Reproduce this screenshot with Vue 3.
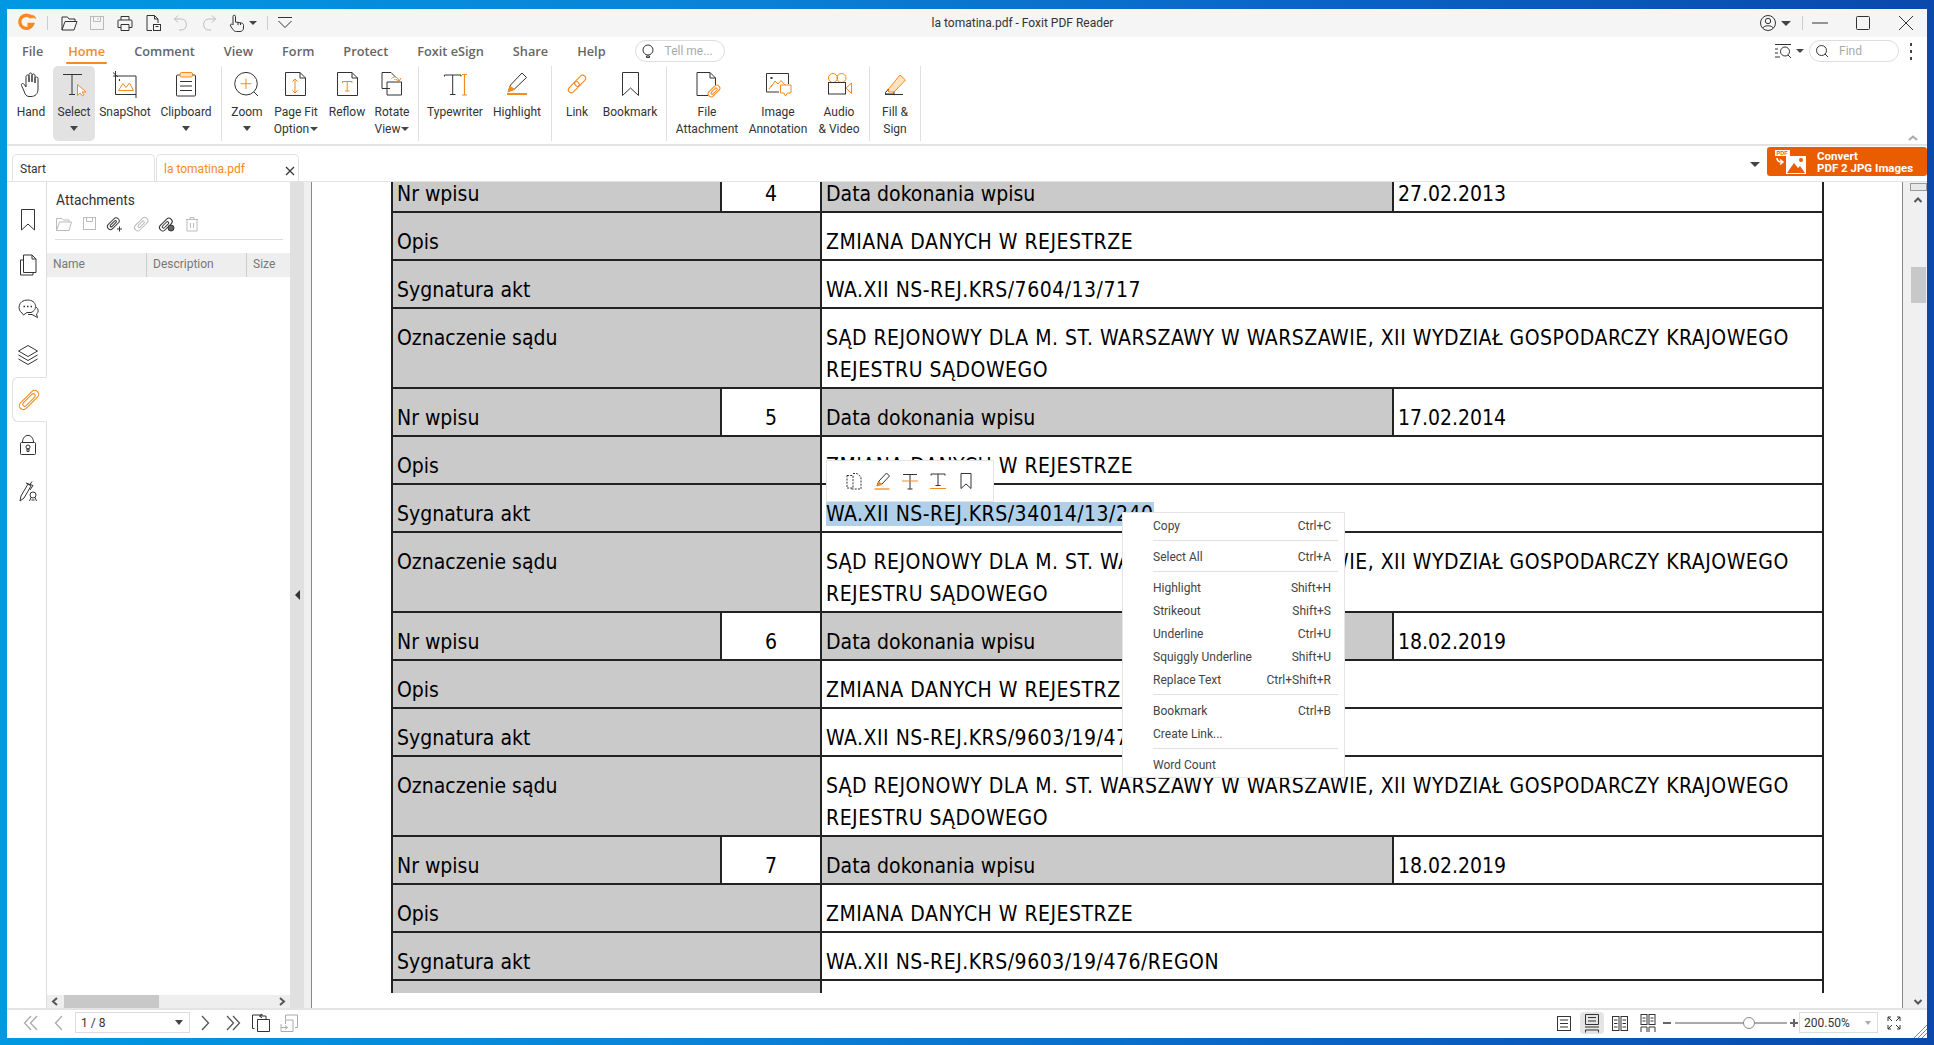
<template>
  <div class="screen">
    <div class="window">
      <!-- title bar -->
      <header class="titlebar">
        <div class="quick">
          <Icon n="logo" :s="20" class="logo" />
          <i class="vsep" />
          <Icon v-for="q in quickIcons" :key="q" :n="q" :s="20" class="quick-ico" />
          <Icon n="touch" :s="20" class="quick-ico touch" /><i class="caret small-gap" />
          <i class="vsep sep-b" />
          <Icon n="more" :s="20" />
        </div>
        <div class="title">la tomatina.pdf - Foxit PDF Reader</div>
        <div class="winctl">
          <Icon n="user" :s="20" /><i class="caret" />
          <i class="vsep sep-c" />
          <Icon n="min" :s="20" class="ctl" />
          <Icon n="max" :s="20" class="ctl" />
          <Icon n="close" :s="20" class="ctl" />
        </div>
      </header>

      <!-- menu row -->
      <nav class="menu">
        <a v-for="m in menus" :key="m" :class="{ active: m === 'Home' }">{{ m }}</a>
        <div class="tell"><Icon n="bulb" :s="16" /><span>Tell me...</span></div>
        <div class="menu-right">
          <Icon n="findlist" :s="20" /><i class="caret" />
          <div class="find"><Icon n="search" :s="16" /><span>Find</span></div>
          <div class="dots"><b /><b /><b /></div>
        </div>
      </nav>

      <!-- ribbon -->
      <section class="ribbon">
        <template v-for="(b, i) in ribbon" :key="i">
          <i v-if="b.sep !== undefined" class="rsep" :style="{ marginLeft: b.sep + 'px' }" />
          <div v-else class="rbtn" :class="{ on: b.on }" :style="{ width: b.w + 'px' }">
            <Icon :n="b.ico" :s="30" />
            <div class="rlabel">
              <span v-for="l in b.lines" :key="l">{{ l }}<i v-if="b.inlineCaret && l === b.lines[b.lines.length - 1]" class="caret tiny" /></span>
              <i v-if="b.caret" class="caret under" />
            </div>
          </div>
        </template>
        <svg class="collapse" width="12" height="8" viewBox="0 0 12 8"><path d="M2 6 L6 2.5 L10 6" fill="none" stroke="#aaa" stroke-width="2" /></svg>
      </section>

      <!-- tabs -->
      <div class="tabs">
        <div class="tab">Start</div>
        <div class="tab cur">la tomatina.pdf<Icon n="tabclose" :s="12" class="tabx" /></div>
        <i class="caret tabcaret" />
        <div class="convert">
          <svg width="32" height="24" viewBox="0 0 32 24">
            <rect x="0" y="0" width="15" height="6" fill="#fff" />
            <text x="1.5" y="5" font-size="5.5" font-weight="700" fill="#e95c00" font-family="Liberation Sans">PDF</text>
            <path d="M2 8 C2 11 4 12 7 12 M5 9.5 L8 12 L5 14.5" fill="none" stroke="#fff" stroke-width="1.5" />
            <rect x="11" y="6" width="20" height="18" fill="#fff" />
            <path d="M12 23 L19 13 L23 18 L25 16 L30 23 Z" fill="#e95c00" />
            <circle cx="26" cy="10" r="2" fill="#e95c00" />
          </svg>
          <div class="convert-text">Convert<br />PDF 2 JPG Images</div>
        </div>
      </div>

      <div class="body">
        <!-- left rail -->
        <aside class="rail">
          <div v-for="r in railIcons" :key="r" class="rail-cell" :class="{ active: r === 'clip' }">
            <Icon :n="r" :s="24" />
          </div>
        </aside>

        <!-- attachments panel -->
        <aside class="panel">
          <div class="panel-title">Attachments</div>
          <div class="panel-tools">
            <Icon v-for="p in panelIcons" :key="p" :n="p" :s="18" />
          </div>
          <div class="panel-head">
            <span class="c1">Name</span><span class="c2">Description</span><span class="c3">Size</span>
          </div>
          <div class="panel-space" />
          <div class="hscroll">
            <svg width="16" height="13" viewBox="0 0 16 13"><path d="M10 3 L6 6.5 L10 10" fill="none" stroke="#555" stroke-width="2" /></svg>
            <div class="hthumb" />
            <svg width="16" height="13" viewBox="0 0 16 13" class="hright"><path d="M6 3 L10 6.5 L6 10" fill="none" stroke="#555" stroke-width="2" /></svg>
          </div>
        </aside>
        <div class="gutter"><i class="gutter-arrow" /></div>
        <div class="gutter2" />

        <!-- document page -->
        <main class="page">
          <div class="clip">
            <table class="doc">
              <colgroup><col class="w1" /><col class="w2" /><col class="w3" /><col class="w4" /></colgroup>
              <tbody>
                <template v-for="e in entries" :key="e.nr">
                  <tr>
                    <td class="g">Nr wpisu</td>
                    <td class="num">{{ e.nr }}</td>
                    <td class="g">Data dokonania wpisu</td>
                    <td>{{ e.date }}</td>
                  </tr>
                  <tr>
                    <td class="g" colspan="2">Opis</td>
                    <td colspan="2" class="caps">ZMIANA DANYCH W REJESTRZE</td>
                  </tr>
                  <tr>
                    <td class="g" colspan="2">Sygnatura akt</td>
                    <td colspan="2" class="caps"><span :class="{ sel: e.nr === 5 }">{{ e.sig }}</span></td>
                  </tr>
                  <!-- the last block runs off the bottom of the page area -->
                  <tr v-if="e.nr < 7" class="tall">
                    <td class="g" colspan="2">Oznaczenie sądu</td>
                    <td colspan="2" class="caps">SĄD REJONOWY DLA M. ST. WARSZAWY W WARSZAWIE, XII WYDZIAŁ GOSPODARCZY KRAJOWEGO REJESTRU SĄDOWEGO</td>
                  </tr>
                  <tr v-else class="tall">
                    <td class="g" colspan="2" />
                    <td colspan="2" />
                  </tr>
                </template>
              </tbody>
            </table>
          </div>

          <!-- selection mini toolbar -->
          <div class="minibar">
            <Icon v-for="t in miniIcons" :key="t" :n="t" :s="20" />
          </div>

          <!-- context menu -->
          <ul class="ctx">
            <template v-for="(c, i) in ctxItems" :key="i">
              <li v-if="c === '-'" class="ctx-sep" />
              <li v-else class="ctx-item"><span>{{ c[0] }}</span><span>{{ c[1] }}</span></li>
            </template>
          </ul>
        </main>

        <div class="rband" />
        <div class="vscroll">
          <div class="split" />
          <svg width="16" height="10" viewBox="0 0 16 10" class="vup"><path d="M4.5 7 L8 3.5 L11.5 7" fill="none" stroke="#555" stroke-width="2" /></svg>
          <div class="vthumb" />
          <svg width="16" height="10" viewBox="0 0 16 10" class="vdown"><path d="M4.5 3 L8 6.5 L11.5 3" fill="none" stroke="#555" stroke-width="2" /></svg>
        </div>
      </div>

      <!-- status bar -->
      <footer class="status">
        <div class="cell"><Icon n="first" :s="20" /></div>
        <div class="cell"><Icon n="prev" :s="20" /></div>
        <div class="pagebox"><span>1 / 8</span><i class="caret" /></div>
        <div class="cell"><Icon n="next" :s="20" /></div>
        <div class="cell"><Icon n="last" :s="20" /></div>
        <div class="cell"><Icon n="pgback" :s="20" /></div>
        <div class="cell"><Icon n="pgfwd" :s="20" /></div>

        <div class="cell push"><Icon n="vsingle" :s="20" /></div>
        <div class="cell"><span class="vhi"><Icon n="vcont" :s="20" /></span></div>
        <div class="cell"><Icon n="vfacing" :s="20" /></div>
        <div class="cell"><Icon n="vfcont" :s="20" /></div>
        <div class="zm minus" />
        <div class="slider"><i class="knob" /></div>
        <div class="zm plus" />
        <div class="zoombox"><span>200.50%</span><i class="caret grey" /></div>
        <div class="cell fit"><Icon n="fit" :s="20" /></div>
        <svg class="grip" width="14" height="14" viewBox="0 0 14 14"><path d="M14 1 L1 14 M14 5 L5 14 M14 9 L9 14" stroke="#888" fill="none" /></svg>
      </footer>
    </div>
  </div>
</template>

<script setup>
import { h } from 'vue'

const O = '#f58a1f'
const G = '#bbbbbb'

// icon bodies, drawn on a square box of the size they are used at
const icons = {
  logo: `<path d="M14.5 4.6 A6.6 6.6 0 1 0 15.4 11.5 H10.5" stroke="${O}" stroke-width="3.4"/><path d="M12 3 C15 1.5 18 2.5 19 5.5 C17.5 4.5 16 4.5 14.5 5" stroke="${O}" fill="${O}" stroke-width=".6"/>`,
  open: `<path d="M3 17 V4 H8.5 L10 6 H16 V8.5 M3 17 H15 L18 8.5 H6 Z"/>`,
  save: `<g stroke="${G}"><rect x="3.5" y="3.5" width="13" height="13"/><path d="M6.5 3.5 V8.5 H13.5 V3.5 M11 5 V7"/></g>`,
  print: `<path d="M6 7 V3.5 H14 V7 M6 14.5 H3 V7.5 Q3 7 4 7 H16 Q17 7 17 8 V14.5 H14 M6 11.5 H14 V17.5 H6 Z"/>`,
  filesave: `<path d="M9 17.5 H4 V2.5 H11.5 L15 6 V10 M11.5 2.5 V6 H15"/><rect x="10.5" y="11.5" width="7" height="6"/><path d="M12.5 13.5 H15.5"/>`,
  undo: `<g stroke="${G}"><path d="M7 2.5 L3.5 6 L7 9.5 M3.5 6 H10.5 C17 6 17 17 10.5 17 H8"/></g>`,
  redo: `<g stroke="${G}"><path d="M13 2.5 L16.5 6 L13 9.5 M16.5 6 H9.5 C3 6 3 17 9.5 17 H12"/></g>`,
  touch: `<path d="M6 12 V3.5 C6 1.8 8.5 1.8 8.5 3.5 V9 L14.5 10 C16 10.4 16.5 11 16.5 12.5 V15 C16.5 17 15 18.5 13 18.5 H9.5 C8 18.5 7 18 6 16.5 L3.5 13 C2.7 11.5 4.6 10.5 5.5 11.5 M11 9.5 V12 M13.5 10 V12"/>`,
  more: `<path d="M3 4.5 H17 M3.5 8 L10 14.5 L16.5 8"/>`,
  user: `<circle cx="10" cy="10" r="7.5"/><circle cx="10" cy="8" r="2.7"/><path d="M4.8 15 C6 12 14 12 15.2 15"/>`,
  min: `<path d="M2 10 H18"/>`,
  max: `<rect x="3.5" y="3.5" width="13" height="13" rx="1"/>`,
  close: `<path d="M3 3 L17 17 M17 3 L3 17"/>`,
  tabclose: `<path d="M2 2 L10 10 M10 2 L2 10" stroke-width="1.2"/>`,
  bulb: `<circle cx="8" cy="7" r="5"/><path d="M6.5 13 H9.5 V14.5 H6.5 Z"/>`,
  findlist: `<path d="M2 3.5 H18 M2 8 H5 M2 12 H5 M2 16 H7"/><circle cx="12" cy="10.5" r="4.5"/><path d="M15 14 L18 17"/>`,
  search: `<circle cx="7.5" cy="7.5" r="5"/><path d="M11 11 L14 14"/>`,

  hand: `<path d="M8 21 L5.5 15.5 C4.7 13.7 7.1 12.7 8.1 14.3 L10 17 V6.5 C10 4.5 13 4.5 13 6.5 V12 V4.5 C13 2.5 16 2.5 16 4.5 V12 V5.5 C16 3.5 19 3.5 19 5.5 V13 V8.5 C19 6.5 22 6.5 22 8.5 V19 C22 24 19 26.5 15 26.5 H13 C10 26.5 9 24 8 21 Z"/>`,
  select: `<path d="M4 4.5 H23 M13 4.5 V24.5 M10 24.5 H16"/><path d="M18.5 14.5 V25.5 L21 23 L23.5 26 L25 24.8 L23 22 H27 Z" stroke="${O}" fill="#fff"/>`,
  snapshot: `<path d="M3 2.5 L8 7 M5.5 1 V24.5 H26 M3 6 H26 V28"/><path d="M8.5 20.5 L13 13.5 L16 17.5 L19.5 13 L23.5 20.5 Z" stroke="${O}"/><path d="M9 10 H10" stroke-width="2"/>`,
  clipboard: `<rect x="5.5" y="5" width="19" height="21" rx="1"/><path d="M9 11.5 H21 M9 16 H21 M9 20.5 H21"/><rect x="9" y="2.5" width="12.5" height="4.5" rx="1.5" stroke="${O}" fill="#fde3c4"/>`,
  zoom: `<circle cx="14" cy="13.7" r="11.3"/><path d="M22 22 L26 26"/><path d="M14 8.5 V19 M8.5 13.7 H19.5" stroke="${O}"/>`,
  pagefit: `<path d="M4.5 2.5 H19 L24.5 8 V25.5 H4.5 Z M19 2.5 V8 H24.5"/><path d="M14 9 V23 M11.5 11.5 L14 9 L16.5 11.5 M11.5 20.5 L14 23 L16.5 20.5" stroke="${O}"/>`,
  reflow: `<path d="M5.5 2.5 H20 L25.5 8 V25.5 H5.5 Z M20 2.5 V8 H25.5"/><path d="M10.5 11.5 H20 V13 M10.5 11.5 V13 M15.2 11.5 V21 M13 21 H17.5" stroke="${O}"/>`,
  rotate: `<path d="M13 18.5 H5 V2.5 H14 L18 6.5 V10"/><path d="M10 12 H24.5 V25 H10 Z"/><path d="M14.5 8.5 C17 6 21 7 22 10.5 M19 9.5 L22.3 11 L24 8" stroke="${O}" fill="#fff"/>`,
  typewriter: `<path d="M4.5 5 H21 V6.5 M4.5 5 V6.5 M12.7 5 V24.5 M10 24.5 H15.5"/><path d="M24.5 4.5 V25 M22 4.5 H27 M22 25 H27" stroke="${O}" stroke-width="1.2"/>`,
  highlight: `<path d="M6.5 21 L8.5 15 L20 3 L24.5 7.5 L12.5 19 Z"/><path d="M6 22 L8 16 L12.5 19.5 Z" fill="${O}" stroke="${O}"/><path d="M5 24 H25" stroke="${O}" stroke-width="2"/>`,
  link: `<g transform="rotate(-45 15 14)" stroke="${O}" stroke-width="1.1"><rect x="4" y="11" width="13" height="6" rx="3"/><rect x="13" y="11" width="13" height="6" rx="3"/></g>`,
  bookmark: `<path d="M7.5 2.5 H23.5 V25.5 L15.5 18 L7.5 25.5 Z"/>`,
  file: `<path d="M16 25.5 H5 V2.5 H18 L23.5 8 V15 M18 2.5 V8 H23.5"/><g transform="rotate(-45 22 21)" stroke="${O}"><rect x="15" y="18" width="14" height="6" rx="3"/><rect x="18" y="20" width="8" height="2.4" rx="1.2"/></g>`,
  image: `<path d="M16 22 H3.5 V3.5 H25.5 V14"/><path d="M8 17 L12 11 L15 14 L18 10.5 L22 15 M6 19 L9 15" stroke="${O}"/><path d="M7.5 8 H9.5" stroke-width="2"/><path d="M17.5 15 H28 V23 H24.5 L22.5 26 L21 23 H17.5 Z" stroke="${O}" fill="#fff"/>`,
  audio: `<circle cx="9" cy="8" r="4.5" stroke="${O}"/><circle cx="17.5" cy="8" r="4.5" stroke="${O}"/><rect x="4.5" y="12.5" width="17" height="11.5" fill="#fff"/><path d="M22 18 L27.5 13 V23.5 Z" stroke="${O}"/>`,
  sign: `<path d="M8.5 19 L20 5 L25.5 10 L14 22 L8.5 22 Z" stroke="${O}" fill="#fde3c4"/><path d="M8.5 19 L5.5 22.5 V24 H14 L14 22 M5 24.5 H23"/>`,

  bm: `<path d="M5.5 1.5 H18.5 V22 L12 16 L5.5 22 Z"/>`,
  pages: `<path d="M4.5 7 H7 M4.5 7 V22 H17 V19.5 M7.5 2 H16 L20 6 V19.5 H7.5 Z M16 2 V6 H20"/>`,
  comment: `<path d="M6 15 C1 12 2 2 11.5 2 C21 2 22 12 15 14.5 L11 14.5 L7.5 17 Z"/><path d="M20 9 C23 11 22.5 15 20.5 16 L21.5 19.5 L16 16.5 H12"/><path d="M7.5 8.5 H9 M11 8.5 H12.5 M14.5 8.5 H16" stroke-width="1.6"/>`,
  layers: `<path d="M12 2.5 L21.5 8 L12 13.5 L2.5 8 Z M2.5 12 L12 17.5 L21.5 12 M2.5 16 L12 21.5 L21.5 16"/>`,
  clip: `<g transform="rotate(-45 12 12)" stroke="${O}" stroke-width="1.1"><rect x="0" y="8" width="24" height="8" rx="4"/><rect x="4" y="10" width="16" height="4" rx="2"/></g>`,
  lock: `<rect x="4.5" y="9.5" width="15" height="12" rx="1"/><path d="M6.5 9.5 C6.5 0 17.5 0 17.5 9.5"/><circle cx="12" cy="14" r="2"/><path d="M11 16 H13 V18.5 H11 Z"/>`,
  signature: `<path d="M4 23 L5 18 L12 6 L15 8 L8 20 Z M10 5 L17 7.5 L14 12 M14 6.5 L16 3.5"/><circle cx="17" cy="17" r="3"/><path d="M13.5 23 L15 19.5 M20.5 23 L19 19.5 M15.5 22 L18.5 22"/>`,

  popen: `<g stroke="${G}"><path d="M1.5 15.5 V3.5 H7 L8.5 5 H14 V7 M1.5 15.5 H14 L16.5 7 H4.5 Z"/></g>`,
  psave: `<g stroke="${G}"><rect x="2.5" y="2.5" width="12" height="12"/><path d="M5.5 2.5 V6.5 H11.5 V2.5"/></g>`,
  padd: `<g transform="rotate(-45 8 8)"><rect x="0" y="5" width="14" height="6" rx="3"/><rect x="3" y="7" width="8" height="2" rx="1"/></g><path d="M11 14 H16 M13.5 11.5 V16.5"/>`,
  pclip: `<g stroke="${G}" transform="rotate(-45 9 9)"><rect x="1" y="6" width="16" height="6.5" rx="3"/><rect x="5" y="8" width="8" height="2.5" rx="1.2"/></g>`,
  pclip2: `<g transform="rotate(-45 9 9)"><rect x="1" y="6" width="15" height="6.5" rx="3"/><rect x="4" y="8" width="8" height="2.5" rx="1.2"/></g><circle cx="14" cy="13" r="3" fill="#666"/>`,
  ptrash: `<g stroke="${G}"><path d="M3 4.5 H15 M7 4.5 V2.5 H11 V4.5 M4 4.5 V16 H14 V4.5 M7.5 8 V13 M10.5 8 V13"/></g>`,

  mcopy: `<path d="M3 4.5 H9 V17 H3 Z M9 2.5 H13 L17 6 V18 H7 V17" stroke-dasharray="2 1.2"/>`,
  mhi: `<path d="M5 14.5 L7 10 L14.5 2 L17.5 5 L10 13 Z"/><path d="M5 15 L7 11 L10 13.5 Z" fill="${O}" stroke="${O}"/><path d="M2.5 18 H17.5" stroke="${O}" stroke-width="1.3"/>`,
  mstrike: `<path d="M3 3.5 H17 M10 3.5 V18 M7.5 18 H12.5"/><path d="M2 10 H18" stroke="${O}"/>`,
  munder: `<path d="M3 3 H17 M3 3 V4.5 M17 3 V4.5 M10 3 V14.5 M7.5 14.5 H12.5"/><path d="M2 17.5 H18" stroke="${O}"/>`,
  mbm: `<path d="M5 2.5 H15 V17.5 L10 13 L5 17.5 Z"/>`,

  first: `<g stroke="#aaa" stroke-width="1.3"><path d="M10 3 L3.5 10 L10 17 M16 3 L9.5 10 L16 17"/></g>`,
  prev: `<g stroke="#aaa" stroke-width="1.3"><path d="M13 3 L6.5 10 L13 17"/></g>`,
  next: `<g stroke="#555" stroke-width="1.3"><path d="M7 3 L13.5 10 L7 17"/></g>`,
  last: `<g stroke="#555" stroke-width="1.3"><path d="M4 3 L10.5 10 L4 17 M10 3 L16.5 10 L10 17"/></g>`,
  pgback: `<path d="M3.5 15.5 H1.5 V2 H12 M6.5 6.5 H18.5 V18.5 H6.5 Z M11 1 L8.5 3 L11 5 M8.5 3 H15 V6"/>`,
  pgfwd: `<g stroke="#aaa"><path d="M6.5 6.5 V2 H18.5 V14.5 H16 M2 11 V18.5 H14 V7 H6.5 V11 M2 14.5 H8 M6 12.5 L8.5 14.5 L6 16.5"/></g>`,
  vsingle: `<rect x="3.5" y="3.5" width="13" height="14"/><path d="M6 7 H14 M6 10.5 H14 M6 14 H14"/>`,
  vcont: `<path d="M3.5 1.5 H16.5 V11.5 H3.5 Z M6 4.5 H14 M6 8 H14 M3 14 H17 M3.5 17 V19.5 M16.5 17 V19.5 M3.5 17 H16.5"/>`,
  vfacing: `<rect x="2.5" y="3.5" width="6.5" height="14"/><rect x="11" y="3.5" width="6.5" height="14"/><path d="M4 7 H7.5 M4 10.5 H7.5 M4 14 H7.5 M12.5 7 H16 M12.5 10.5 H16 M12.5 14 H16"/>`,
  vfcont: `<rect x="3" y="1.5" width="6" height="10"/><rect x="11" y="1.5" width="6" height="10"/><path d="M4.5 5 H7.5 M4.5 8 H7.5 M12.5 5 H15.5 M12.5 8 H15.5 M3 19 V14 H9 V19 M11 19 V14 H17 V19"/>`,
  fit: `<path d="M4 8 V4 L8 8 M4 4 H7 M16 8 V4 L12 8 M16 4 H13 M4 12 V16 L8 12 M4 16 H7 M16 12 V16 L12 12 M16 16 H13"/>`,
}

const Icon = (p) =>
  h('svg', {
    class: 'ico',
    width: p.s,
    height: p.s,
    viewBox: `0 0 ${p.s} ${p.s}`,
    fill: 'none',
    stroke: '#333',
    innerHTML: icons[p.n],
  })
Icon.props = ['n', 's']

const quickIcons = ['open', 'save', 'print', 'filesave', 'undo', 'redo']
const menus = ['File', 'Home', 'Comment', 'View', 'Form', 'Protect', 'Foxit eSign', 'Share', 'Help']

const ribbon = [
  { ico: 'hand', w: 44, lines: ['Hand'] },
  { ico: 'select', w: 42, lines: ['Select'], caret: true, on: true },
  { ico: 'snapshot', w: 60, lines: ['SnapShot'] },
  { ico: 'clipboard', w: 62, lines: ['Clipboard'], caret: true },
  { sep: 4 },
  { ico: 'zoom', w: 50, lines: ['Zoom'], caret: true },
  { ico: 'pagefit', w: 48, lines: ['Page Fit', 'Option'], inlineCaret: true },
  { ico: 'reflow', w: 54, lines: ['Reflow'] },
  { ico: 'rotate', w: 36, lines: ['Rotate', 'View'], inlineCaret: true },
  { sep: 8 },
  { ico: 'typewriter', w: 72, lines: ['Typewriter'] },
  { ico: 'highlight', w: 52, lines: ['Highlight'] },
  { sep: 8 },
  { ico: 'link', w: 50, lines: ['Link'] },
  { ico: 'bookmark', w: 56, lines: ['Bookmark'] },
  { sep: 8 },
  { ico: 'file', w: 80, lines: ['File', 'Attachment'] },
  { ico: 'image', w: 62, lines: ['Image', 'Annotation'] },
  { ico: 'audio', w: 60, lines: ['Audio', '& Video'] },
  { sep: 0 },
  { ico: 'sign', w: 50, lines: ['Fill &', 'Sign'] },
  { sep: 0 },
]

const railIcons = ['bm', 'pages', 'comment', 'layers', 'clip', 'lock', 'signature']
const panelIcons = ['popen', 'psave', 'padd', 'pclip', 'pclip2', 'ptrash']
const miniIcons = ['mcopy', 'mhi', 'mstrike', 'munder', 'mbm']

const entries = [
  { nr: 4, date: '27.02.2013', sig: 'WA.XII NS-REJ.KRS/7604/13/717' },
  { nr: 5, date: '17.02.2014', sig: 'WA.XII NS-REJ.KRS/34014/13/240' },
  { nr: 6, date: '18.02.2019', sig: 'WA.XII NS-REJ.KRS/9603/19/476/REGON' },
  { nr: 7, date: '18.02.2019', sig: 'WA.XII NS-REJ.KRS/9603/19/476/REGON' },
]

const ctxItems = [
  ['Copy', 'Ctrl+C'], '-',
  ['Select All', 'Ctrl+A'], '-',
  ['Highlight', 'Shift+H'],
  ['Strikeout', 'Shift+S'],
  ['Underline', 'Ctrl+U'],
  ['Squiggly Underline', 'Shift+U'],
  ['Replace Text', 'Ctrl+Shift+R'], '-',
  ['Bookmark', 'Ctrl+B'],
  ['Create Link...', ''], '-',
  ['Word Count', ''],
]
</script>

<style>
html, body { margin: 0; overflow: hidden; }
</style>

<style scoped>
.screen {
  width: 1934px;
  height: 1045px;
  box-sizing: border-box;
  padding: 9px 7px 7px;
  background: linear-gradient(90deg, #0098e2 0%, #0a84d8 35%, #0a62c4 70%, #0a48ac 100%);
  font-family: Roboto, "Noto Sans", sans-serif;
  font-size: 12px;
  color: #333;
}
.window { height: 100%; display: flex; flex-direction: column; background: #fff; }
.ico { display: block; flex: none; }

.caret {
  display: inline-block;
  width: 0;
  height: 0;
  border-left: 5px solid transparent;
  border-right: 5px solid transparent;
  border-top: 5px solid #444;
}
.caret.tiny { border-width: 4px 4px 0; margin-left: 1px; vertical-align: 2px; }
.caret.under { display: block; margin: 5px auto 0; border-width: 5px 4px 0; }
.caret.grey { border-top-color: #aaa; }

.titlebar { height: 28px; flex: none; display: flex; align-items: center; background: #f5f5f5; }
.quick { display: flex; align-items: center; width: 288px; padding-left: 10px; box-sizing: border-box; }
.vsep { display: block; width: 1px; height: 14px; background: #ccc; margin: 0 11px 0 10px; }
.quick-ico { margin-right: 8px; }
.quick .touch { margin-right: 2px; }
.small-gap { border-width: 4px 4px 0; }
.quick .sep-b { margin: 0 8px 0 10px; }
.title { flex: 1; text-align: center; font-size: 12px; padding-right: 8px; }
.winctl { display: flex; align-items: center; padding-right: 11px; gap: 3px; }
.winctl .sep-c { margin: 0 2px 0 8px; }
.ctl { margin-left: 20px; }
.winctl .sep-c + .ctl { margin-left: 2px; }

.menu { height: 28px; flex: none; display: flex; align-items: center; gap: 29px; padding-left: 15px; position: relative; }
.menu a { font-family: "Open Sans", sans-serif; font-size: 12.75px; font-weight: 600; color: #666; position: relative; }
.menu a.active { color: #f58a1f; margin-left: -4px; }
.menu a.active::after { content: ""; position: absolute; left: -2px; right: -2px; bottom: -4px; height: 2px; border-radius: 1px; background: #f58a1f; }
.tell { width: 90px; height: 22px; box-sizing: border-box; border: 1px solid #ddd; border-radius: 11px; display: flex; align-items: center; gap: 9px; padding-left: 4px; color: #aaa; margin-left: 0; }
.menu-right { margin-left: auto; display: flex; align-items: center; padding-right: 15px; }
.menu-right .caret { border-width: 4px 4px 0; margin: 0 3px 0 3px; }
.find { width: 90px; height: 22px; box-sizing: border-box; border: 1px solid #ddd; border-radius: 11px; display: flex; align-items: center; gap: 9px; padding-left: 4px; color: #aaa; margin: 0 11px 0 2px; }
.dots { display: flex; flex-direction: column; gap: 4px; }
.dots b { display: block; width: 2px; height: 3px; background: #444; }

.ribbon { height: 81px; flex: none; box-sizing: border-box; display: flex; padding: 1px 0 0 2px; border-bottom: 2px solid #e3e3e3; position: relative; }
.rbtn { height: 75px; flex: none; display: flex; flex-direction: column; align-items: center; padding-top: 4px; box-sizing: border-box; border-radius: 5px; }
.rbtn.on { background: #e2e2e2; }
.rlabel { margin-top: 4px; display: flex; flex-direction: column; align-items: center; line-height: 17px; white-space: nowrap; color: #333; }
.rsep { display: block; flex: none; width: 1px; height: 75px; background: #e0e0e0; margin-right: 0; }
.collapse { position: absolute; right: 8px; bottom: 2px; }

.tabs { height: 36px; flex: none; display: flex; align-items: flex-end; padding-left: 5px; border-bottom: 1px solid #e3e3e3; box-sizing: border-box; position: relative; }
.tab { width: 143px; height: 27px; box-sizing: border-box; border: 1px solid #e0e0e0; border-bottom: none; border-radius: 5px 5px 0 0; padding: 7px 0 0 7px; margin-right: 1px; display: flex; justify-content: space-between; }
.tab.cur { color: #f58a1f; }
.tabx { margin: 3px 2px 0 0; }
.tabcaret { position: absolute; left: 1743px; top: 16px; }
.convert { position: absolute; right: 0; top: 1px; width: 160px; height: 29px; box-sizing: border-box; background: #e95c00; border-radius: 3px; color: #fff; display: flex; align-items: center; padding-left: 8px; gap: 10px; font-weight: 700; font-size: 11.5px; line-height: 12px; }

.body { flex: 1; min-height: 0; display: flex; }
.rail { width: 40px; flex: none; box-sizing: border-box; border-right: 1px solid #ddd; padding-top: 15px; }
.rail-cell { height: 45px; display: flex; align-items: center; padding-left: 9px; box-sizing: border-box; }
.rail-cell.active { background: #fff; margin: 0 -1px 0 5px; padding-left: 4px; border: 1px solid #e0e0e0; border-right: 1px solid #fff; border-radius: 6px 0 0 6px; position: relative; }

.panel { width: 243px; flex: none; display: flex; flex-direction: column; }
.panel-title { margin: 10px 0 0 9px; font-size: 13.8px; line-height: 16px; }
.panel-tools { display: flex; gap: 7.5px; margin: 7px 7px 0 8px; padding-bottom: 6px; border-bottom: 1px solid #ddd; height: 18px; }
.panel-head { margin-top: 13px; height: 24px; background: #eee; display: flex; color: #777; line-height: 23px; font-size: 12px; }
.panel-head span { box-sizing: border-box; padding-left: 6px; border-right: 1px solid #ccc; }
.panel-head .c1, .panel-head .c2 { width: 100px; }
.panel-head .c3 { border-right: none; }
.panel-space { flex: 1; }
.hscroll { height: 13px; background: #eee; display: flex; position: relative; }
.hthumb { width: 95px; background: #c8c8c8; margin-left: 1px; }
.hright { position: absolute; right: 0; }

.gutter { width: 14px; flex: none; background: #e0e0e0; display: flex; align-items: center; justify-content: center; }
.gutter-arrow { border-top: 5px solid transparent; border-bottom: 5px solid transparent; border-right: 5px solid #333; }
.gutter2 { width: 7px; flex: none; background: #f0f0f0; border-right: 1px solid #888; }

.page { flex: 1; min-width: 0; position: relative; }
.clip { height: 811px; overflow: hidden; padding-left: 79px; }
.doc {
  table-layout: fixed;
  width: 1431px;
  margin-top: -19px;
  border-collapse: collapse;
  font-family: "DejaVu Sans", sans-serif;
  font-stretch: condensed;
  font-size: 21px;
  line-height: 32px;
  color: #000;
}
.w1 { width: 329px; }
.w2 { width: 100px; }
.w3 { width: 572px; }
.w4 { width: 430px; }
.doc tr { height: 48px; }
.doc tr.tall { height: 80px; }
.doc td { border: 2px solid #222; padding: 13px 4px 0; vertical-align: top; box-sizing: border-box; }
.doc td.g { background: #cacaca; }
.doc td.num { text-align: center; }
.doc td.caps { letter-spacing: 0.5px; }
.sel { background: #b0cfe8; }

.minibar { position: absolute; left: 514px; top: 278px; width: 168px; height: 42px; box-sizing: border-box; background: #fff; border: 1px solid #e4e4e4; display: flex; align-items: center; gap: 8px; padding-left: 17px; }
.ctx { position: absolute; left: 810px; top: 330px; width: 223px; height: 266px; box-sizing: border-box; margin: 0; padding: 1px 6px 0 30px; list-style: none; background: #fff; border: 1px solid #e4e4e4; color: #444; font-size: 12px; }
.ctx-item { height: 23px; display: flex; justify-content: space-between; align-items: center; padding-right: 7px; }
.ctx-sep { height: 8px; position: relative; }
.ctx-sep::after { content: ""; position: absolute; left: 0; right: 0; top: 3px; height: 1px; background: #e0e0e0; }

.rband { width: 8px; flex: none; background: #f0f0f0; border-left: 1px solid #888; box-sizing: border-box; }
.vscroll { width: 17px; flex: none; background: #f0f0f0; position: relative; }
.split { height: 8px; margin-top: 1px; border: 1px solid #999; box-sizing: border-box; background: #e8e8e8; }
.vup { position: absolute; top: 13px; left: 0; }
.vdown { position: absolute; bottom: 1px; left: 0; }
.vthumb { position: absolute; top: 85px; left: 1px; width: 15px; height: 36px; background: #c8c8c8; }

.status { height: 30px; flex: none; box-sizing: border-box; border-top: 2px solid #e3e3e3; display: flex; align-items: center; padding: 0 19px 3px 10px; position: relative; }
.cell { width: 28px; height: 100%; flex: none; display: flex; align-items: center; justify-content: center; }
.pagebox { width: 115px; height: 21px; margin: 0 1px 0 2px; flex: none; box-sizing: border-box; border: 1px solid #ddd; display: flex; align-items: center; justify-content: space-between; padding: 0 6px 0 5px; font-size: 12px; }
.pagebox .caret { border-width: 5px 4px 0; }
.push { margin-left: auto; }
.vhi { display: flex; padding: 1px 2px; background: #e4e4e4; border-radius: 4px; }
.zm { flex: none; height: 2px; position: relative; }
.zm.minus { width: 13px; }
.zm.minus::before { content: ""; position: absolute; left: 1px; top: 0; width: 8px; height: 2px; background: #666; }
.zm.plus { width: 12px; }
.zm.plus::before { content: ""; position: absolute; left: 3px; top: 0; width: 8px; height: 2px; background: #666; }
.zm.plus::after { content: ""; position: absolute; left: 6px; top: -3px; width: 2px; height: 8px; background: #666; }
.slider { width: 112px; height: 2px; flex: none; background: #aaa; position: relative; }
.knob { position: absolute; left: 68px; top: -5px; width: 10px; height: 10px; border-radius: 50%; background: #fff; border: 1px solid #888; }
.zoombox { width: 79px; height: 21px; flex: none; box-sizing: border-box; border: 1px solid #ddd; display: flex; align-items: center; justify-content: space-between; padding: 0 6px 0 4px; font-size: 12px; }
.zoombox .caret { border-width: 4px 3px 0; }
.fit { margin-left: 2px; }
.grip { position: absolute; right: 0; bottom: 0; }
.convert-text { white-space: nowrap; }
</style>
